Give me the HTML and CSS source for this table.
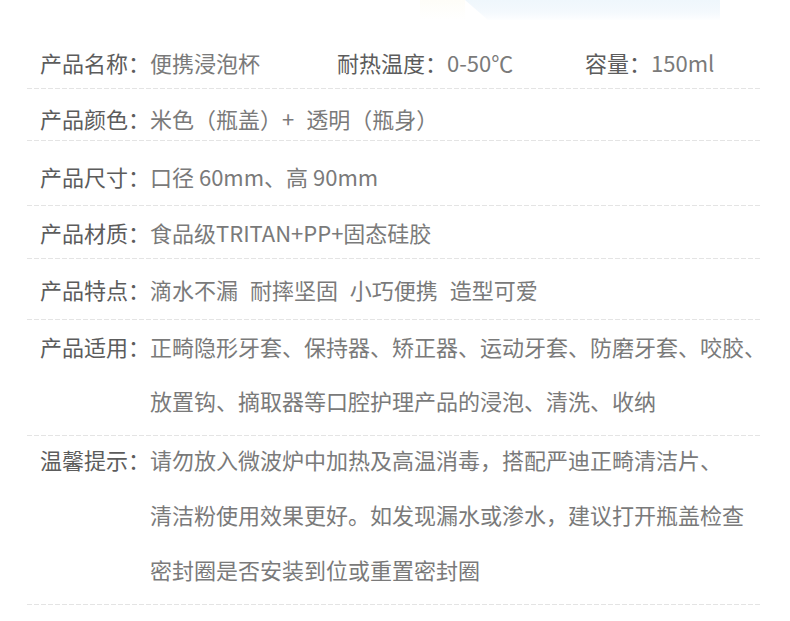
FILE: index.html
```html
<!DOCTYPE html>
<html lang="zh-CN">
<head>
<meta charset="utf-8">
<title>产品参数</title>
<link rel="stylesheet" href="styles.css">
</head>
<body>
<div class="banner"><div class="banner-warm"></div><div class="banner-cool"></div></div>
<div class="sheet">
  <div class="row r1">
    <div class="triple">
      <div class="pair"><span class="label">产品名称：</span><span class="value">便携浸泡杯</span></div>
      <div class="pair"><span class="label">耐热温度：</span><span class="value">0-50℃</span></div>
      <div class="pair"><span class="label">容量：</span><span class="value">150ml</span></div>
    </div>
  </div>
  <div class="row r2">
    <span class="label lab">产品颜色：</span><span class="value">米色（瓶盖）<span class="plus">+</span>透明（瓶身）</span>
  </div>
  <div class="row r3">
    <span class="label lab">产品尺寸：</span><span class="value">口径 60mm、高 90mm</span>
  </div>
  <div class="row r4">
    <span class="label lab">产品材质：</span><span class="value">食品级TRITAN+PP+固态硅胶</span>
  </div>
  <div class="row r5">
    <span class="label lab">产品特点：</span><span class="value spaced">滴水不漏 耐摔坚固 小巧便携 造型可爱</span>
  </div>
  <div class="row r6">
    <span class="label lab">产品适用：</span><span class="value multi">正畸隐形牙套、保持器、矫正器、运动牙套、防磨牙套、咬胶、<br>放置钩、摘取器等口腔护理产品的浸泡、清洗、收纳</span>
  </div>
  <div class="row r7">
    <span class="label lab">温馨提示：</span><span class="value multi">请勿放入微波炉中加热及高温消毒，搭配严迪正畸清洁片、<br>清洁粉使用效果更好。如发现漏水或渗水，建议打开瓶盖检查<br>密封圈是否安装到位或重置密封圈</span>
  </div>
</div>
</body>
</html>
```

FILE: styles.css
```css
html, body {
  margin: 0;
  padding: 0;
  background: #ffffff;
}

body {
  width: 790px;
  height: 621px;
  overflow: hidden;
  font-family: "Noto Sans CJK SC", "Noto Sans", sans-serif;
  font-weight: 400;
  font-size: 22px;
  color: #666666;
}

.banner {
  height: 20px;
  margin-left: 420px;
  width: 300px;
  display: flex;
}

.banner-warm {
  width: 45px;
  height: 100%;
  background: linear-gradient(to bottom, #fefdf8, #ffffff);
}

.banner-cool {
  flex: 1;
  height: 100%;
  background: linear-gradient(to bottom, #eff7fc 0%, #f4f9fd 60%, #fdfeff 100%);
  clip-path: polygon(0 0, 100% 0, 100% 100%, 9% 100%);
}

.sheet {
  margin-left: 27px;
  width: 733px;
}

.row {
  display: flex;
  padding-left: 13px;
  line-height: 30px;
  background-image: linear-gradient(to right, #e4e4e4 5px, transparent 5px);
  background-size: 7px 1px;
  background-repeat: repeat-x;
  background-position: left bottom;
}

.label {
  color: #5c5c5c;
  white-space: nowrap;
}

.lab {
  width: 110px;
  flex: none;
}

.value {
  color: #7a7a7a;
  white-space: nowrap;
}

.plus {
  margin: 0 12px 0 0;
}

.spaced {
  word-spacing: 7px;
}

.triple {
  display: grid;
  grid-template-columns: 297px 248px auto;
}

.r1 { padding-top: 27px; padding-bottom: 12px; }
.r2 { padding-top: 14px; padding-bottom: 8px; }
.r3 { padding-top: 20px; padding-bottom: 15px; }
.r4 { padding-top: 11px; padding-bottom: 12px; }
.r5 { padding-top: 15px; padding-bottom: 16px; }
.r6 { padding-top: 0; padding-bottom: 9px; line-height: 54px; }
.r6 .lab, .r6 .value { margin-top: -1px; }
.r7 { padding-top: 0; padding-bottom: 8px; line-height: 55px; }
.r7 .lab, .r7 .value { margin-top: -4px; }
```
